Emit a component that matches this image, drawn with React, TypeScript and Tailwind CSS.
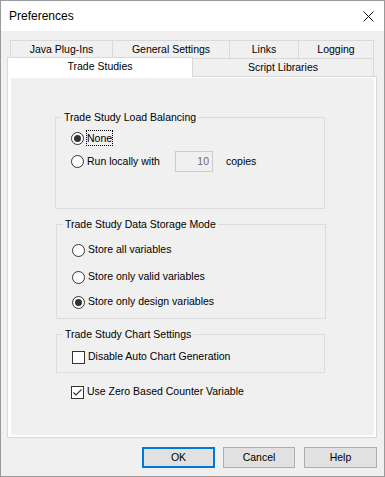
import type { ReactNode } from 'react';

const font = "font-['Liberation_Sans',Arial,sans-serif]";

const Radio = ({ checked }: { checked?: boolean }) => (
  <span className="flex h-[13px] w-[13px] shrink-0 items-center justify-center rounded-full border border-[#333333] bg-white">
    {checked && <span className="h-[7px] w-[7px] rounded-full bg-[#333333]" />}
  </span>
);

const Check = ({ checked }: { checked?: boolean }) => (
  <span className="flex h-[13px] w-[13px] shrink-0 items-center justify-center border border-[#333333] bg-white">
    {checked && (
      <svg width="11" height="11" viewBox="0 0 11 11">
        <polyline
          points="1.5,5.5 4,8 9.5,2.5"
          fill="none"
          stroke="#333333"
          strokeWidth="1.2"
        />
      </svg>
    )}
  </span>
);

const Group = ({
  title,
  className,
  children,
}: {
  title: string;
  className: string;
  children: ReactNode;
}) => (
  <fieldset className={`border border-[#dcdcdc] ${className}`}>
    <legend className="ml-[6px] px-[2px] text-[10.5px] leading-[13px]">
      {title}
    </legend>
    <div className="pl-[15px]">{children}</div>
  </fieldset>
);

const Row = ({ children, className = '' }: { children: ReactNode; className?: string }) => (
  <div className={`flex h-[16px] items-center text-[10.5px] ${className}`}>{children}</div>
);

const tabBase =
  'flex h-[18px] items-center justify-center border-t border-r border-[#d9d9d9] bg-[#f0f0f0] text-[10.5px]';

const App = () => {
  return (
    <div
      className={`flex h-[477px] w-[385px] flex-col border border-[#9a9a9a] bg-[#f0f0f0] text-black ${font}`}
    >
      <div className="flex h-[30px] shrink-0 items-center justify-between bg-white pl-[8px] pr-[10px]">
        <span className="text-[12px]">Preferences</span>
        <svg width="11" height="11" viewBox="0 0 11 11">
          <path d="M0.5 0.5 L10.5 10.5 M10.5 0.5 L0.5 10.5" stroke="#111" strokeWidth="1" />
        </svg>
      </div>

      <div className="flex flex-1 flex-col pl-[6px] pt-[9px]">
        {/* tab rows */}
        <div className="ml-[3px] flex">
          <div className={`${tabBase} w-[103px] border-l`}>Java Plug-Ins</div>
          <div className={`${tabBase} w-[117px]`}>General Settings</div>
          <div className={`${tabBase} w-[69px]`}>Links</div>
          <div className={`${tabBase} w-[75px]`}>Logging</div>
        </div>
        <div className="flex h-[18px]">
          <div className="relative z-10 -mt-[1px] flex h-[20px] w-[186px] items-center justify-center border-x border-t border-[#d9d9d9] bg-white pb-[2px] text-[10.5px]">
            Trade Studies
          </div>
          <div className={`${tabBase} w-[181px] pt-[1px]`}>Script Libraries</div>
        </div>

        {/* tab page */}
        <div className="flex h-[362px] w-[370px] flex-col border border-[#d9d9d9] bg-white pb-[2px] pl-[3px] pr-[2px] pt-[1px]">
          <div className="flex flex-1 flex-col bg-[#f0f0f0] pt-[33px]">
            <Group title="Trade Study Load Balancing" className="ml-[44px] w-[270px] pb-[36px] pt-[6px]">
              <Row>
                <Radio checked />
                <span className="ml-[2px] border border-dotted border-black leading-[14px]">None</span>
              </Row>
              <div className="mt-[5px] flex h-[21px] items-center text-[10.5px]">
                <Radio />
                <span className="ml-[3px] w-[88px]">Run locally with</span>
                <span className="flex h-[21px] w-[38px] items-center justify-end border border-[#cccccc] bg-[#f0f0f0] pr-[3px] text-[#6d6d6d]">
                  10
                </span>
                <span className="ml-[13px]">copies</span>
              </div>
            </Group>

            <Group title="Trade Study Data Storage Mode" className="ml-[45px] mt-[9px] w-[270px] pb-[8px] pt-[11px]">
              <Row>
                <Radio />
                <span className="ml-[3px]">Store all variables</span>
              </Row>
              <Row className="mt-[11px]">
                <Radio />
                <span className="ml-[3px]">Store only valid variables</span>
              </Row>
              <Row className="mt-[9px]">
                <Radio checked />
                <span className="ml-[3px]">Store only design variables</span>
              </Row>
            </Group>

            <Group title="Trade Study Chart Settings" className="ml-[45px] mt-[9px] w-[269px] pb-[7px] pt-[8px]">
              <Row>
                <Check />
                <span className="ml-[3px]">Disable Auto Chart Generation</span>
              </Row>
            </Group>

            <Row className="ml-[60px] mt-[11px]">
              <Check checked />
              <span className="ml-[3px]">Use Zero Based Counter Variable</span>
            </Row>
          </div>
        </div>

        {/* buttons */}
        <div className="mt-[9px] flex w-[370px] justify-end text-[10.5px]">
          <button
            type="button"
            className="h-[21px] w-[73px] border-2 border-[#0078d7] bg-[#e1e1e1]"
          >
            OK
          </button>
          <button
            type="button"
            className="ml-[8px] h-[21px] w-[72px] border border-[#adadad] bg-[#e1e1e1]"
          >
            Cancel
          </button>
          <button
            type="button"
            className="ml-[9px] h-[21px] w-[73px] border border-[#adadad] bg-[#e1e1e1]"
          >
            Help
          </button>
        </div>
      </div>
    </div>
  );
};

export default App;
